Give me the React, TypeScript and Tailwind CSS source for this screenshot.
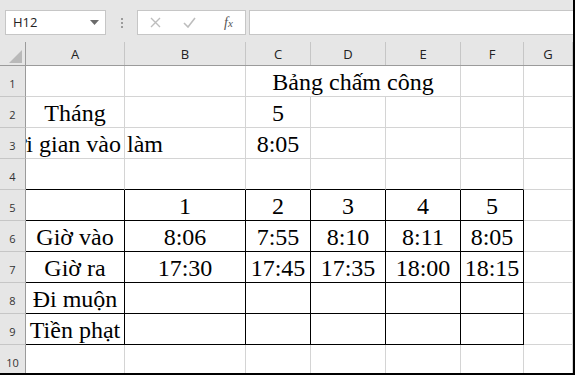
import React from "react";

const cols = [
  { name: "A", w: "w-[99px]" },
  { name: "B", w: "w-[121px]" },
  { name: "C", w: "w-[65px]" },
  { name: "D", w: "w-[75px]" },
  { name: "E", w: "w-[75px]" },
  { name: "F", w: "w-[63px]" },
  { name: "G", w: "flex-1" },
];

// sheet contents, row by row (A..F)
const data: string[][] = [
  ["", "", "", "", "", ""],
  ["Tháng", "", "5", "", "", ""],
  ["Thời gian vào làm", "", "8:05", "", "", ""],
  ["", "", "", "", "", ""],
  ["", "1", "2", "3", "4", "5"],
  ["Giờ vào", "8:06", "7:55", "8:10", "8:11", "8:05"],
  ["Giờ ra", "17:30", "17:45", "17:35", "18:00", "18:15"],
  ["Đi muộn", "", "", "", "", ""],
  ["Tiền phạt", "", "", "", "", ""],
  ["", "", "", "", "", ""],
];

const serif = "font-['Liberation_Serif','Times_New_Roman',serif]";
const ui = "font-['Open_Sans','Liberation_Sans',sans-serif]";

const Cell = ({ r, c }: { r: number; c: number }) => {
  const inTable = c < 6;
  const blackBottom = inTable && r >= 3 && r <= 8;
  const blackRight = inTable && r >= 4 && r <= 8;
  const text = c < 6 ? data[r][c] : "";
  return (
    <div
      className={`${cols[c].w} h-full shrink-0 flex items-end justify-center border-r border-b ${
        blackRight ? "border-r-black" : "border-r-[#d4d4d4]"
      } ${blackBottom ? "border-b-black" : "border-b-[#d4d4d4]"}`}
    >
      <span className={`${serif} text-[24px] leading-[27px] whitespace-nowrap text-black`}>{text}</span>
    </div>
  );
};

const RowHead = ({ n }: { n: number }) => (
  <div
    className={`relative z-10 w-[26px] h-full shrink-0 bg-[#e6e6e6] border-r border-r-[#9b9b9b] border-b border-b-[#c6c6c6] flex items-center justify-center pt-[6px] ${ui} text-[11px] text-[#333]`}
  >
    {n}
  </div>
);

export default function App() {
  return (
    <div className="relative w-[575px] h-[375px] overflow-hidden bg-white border-r-2 border-b-2 border-black">
      {/* formula bar */}
      <div className="h-[42px] bg-[#e6e6e6] flex items-start pt-[10px] pl-[5px]">
        <div className="w-[101px] h-[25px] bg-white border border-[#c6c6c6] flex items-center justify-between pl-[7px] pr-[6px]">
          <span className={`${ui} text-[13px] text-[#222]`}>H12</span>
          <svg width="9" height="5" viewBox="0 0 9 5">
            <path d="M0 0 H9 L4.5 5 Z" fill="#6b6b6b" />
          </svg>
        </div>
        <div className="w-[31px] h-[25px] flex flex-col items-center justify-center gap-[2px]">
          <span className="w-[2px] h-[2px] bg-[#9b9b9b]" />
          <span className="w-[2px] h-[2px] bg-[#9b9b9b]" />
          <span className="w-[2px] h-[2px] bg-[#9b9b9b]" />
        </div>
        <div className="w-[109px] h-[25px] bg-white border border-[#c6c6c6] flex items-center pl-[12px] gap-[22px]">
          <svg width="11" height="11" viewBox="0 0 11 11">
            <path d="M1 1 L10 10 M10 1 L1 10" stroke="#bdbdbd" strokeWidth="1.4" />
          </svg>
          <svg width="13" height="11" viewBox="0 0 13 11">
            <path d="M1 6 L5 10 L12 1" stroke="#bdbdbd" strokeWidth="1.6" fill="none" />
          </svg>
          <span className={`${serif} italic text-[14px] text-[#555] ml-[6px] leading-none`}>
            f<span className="text-[11px]">x</span>
          </span>
        </div>
        <div className="flex-1 h-[25px] ml-[3px] bg-white border-y border-l border-[#c6c6c6]" />
      </div>

      {/* column headers */}
      <div className="flex h-[24px] bg-[#e6e6e6] border-b border-b-[#9b9b9b]">
        <div className="w-[26px] h-full shrink-0 border-r border-r-[#9b9b9b] flex items-end justify-end pr-[3px] pb-[2px]">
          <svg width="13" height="13" viewBox="0 0 13 13">
            <path d="M13 0 V13 H0 Z" fill="#b9b9b9" />
          </svg>
        </div>
        {cols.map((c) => (
          <div
            key={c.name}
            className={`${c.w} h-full shrink-0 border-r border-r-[#c6c6c6] flex items-center justify-center pt-[2px] ${ui} text-[13px] text-[#222]`}
          >
            {c.name}
          </div>
        ))}
      </div>

      {/* grid */}
      <div className="flex flex-col">
        {data.map((_, r) => (
          <div key={r} className="relative flex h-[31px]">
            <RowHead n={r + 1} />
            {r === 0 ? (
              <>
                <Cell r={0} c={0} />
                <Cell r={0} c={1} />
                <div className="w-[215px] h-full shrink-0 flex items-end justify-center border-r border-b border-[#d4d4d4]">
                  <span className={`${serif} text-[24px] leading-[27px] whitespace-nowrap text-black`}>
                    Bảng chấm công
                  </span>
                </div>
                <Cell r={0} c={5} />
                <Cell r={0} c={6} />
              </>
            ) : (
              cols.map((_, c) => <Cell key={c} r={r} c={c} />)
            )}
          </div>
        ))}
      </div>
    </div>
  );
}
